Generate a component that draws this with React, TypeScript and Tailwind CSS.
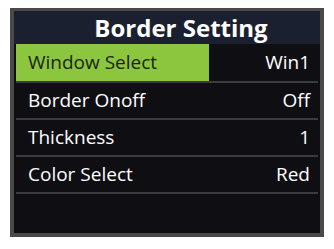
export default function App() {
  const rows = [
    { label: "Border Onoff", value: "Off" },
    { label: "Thickness", value: "1" },
    { label: "Color Select", value: "Red" },
  ];
  return (
    <div className="h-[249px] w-[334px] bg-white pl-[10px] pt-[8px]">
      <div
        className="flex h-[229px] w-[314px] flex-col border-[4px] border-t-[3px] border-[#4a4a4a] bg-[#0e0e13]"
        style={{ fontFamily: '"Open Sans", "Noto Sans", sans-serif' }}
      >
        <div className="flex h-[33px] items-center justify-center bg-[#1b2030] pl-[28px] text-[24px] font-bold text-white">
          Border Setting
        </div>
        <div className="flex flex-col px-[2px]">
          <div className="flex h-[39px] items-center border-b-[2px] border-[#3a3a40]">
            <div className="flex h-full w-[193px] items-center bg-[#8cc63f] pl-[12px] text-[19px] font-medium text-[#1a1f14]">
              Window Select
            </div>
            <div className="flex-1 pr-[8px] text-right text-[19px] font-medium text-white">Win1</div>
          </div>
          {rows.map((r) => (
            <div
              key={r.label}
              className="flex h-[37px] items-center justify-between border-b-[2px] border-[#3a3a40] pl-[12px] pr-[8px] text-[19px] font-medium text-white"
            >
              <span>{r.label}</span>
              <span>{r.value}</span>
            </div>
          ))}
        </div>
      </div>
    </div>
  );
}
